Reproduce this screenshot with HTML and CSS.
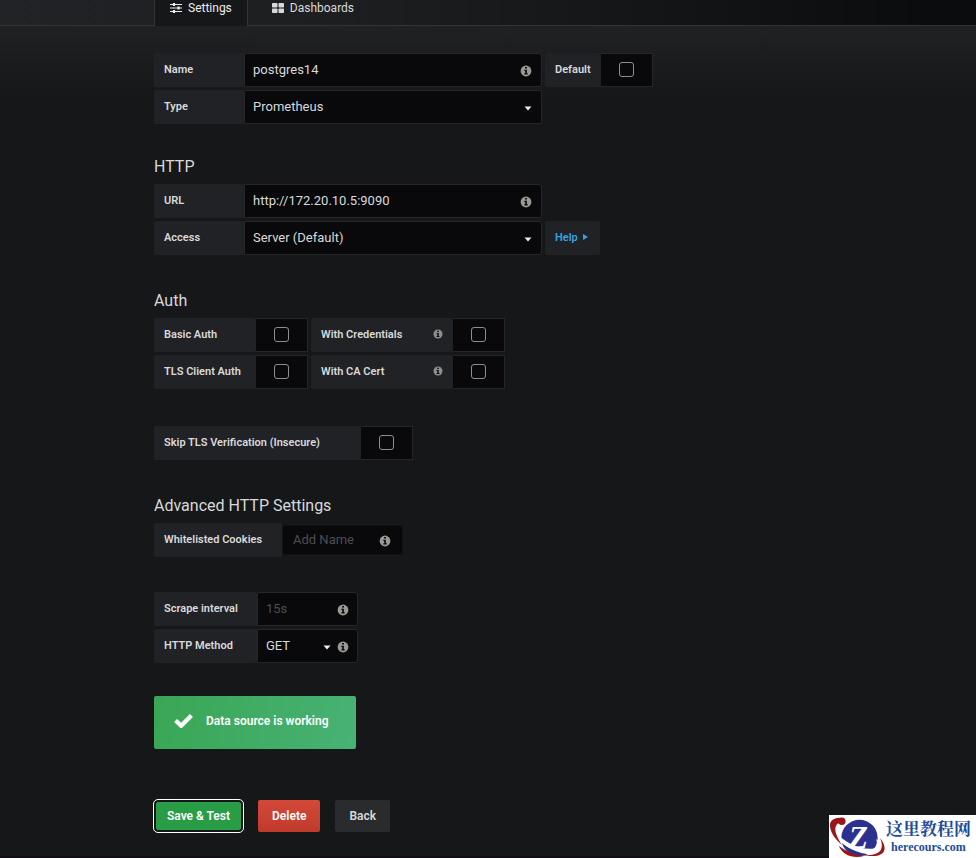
FILE: index.html
```
<!DOCTYPE html>
<html lang="en">

<head>
  <meta charset="UTF-8">
  <meta name="viewport" content="width=device-width, initial-scale=1.0">
  <title>Data Sources: postgres14</title>
  <link rel="stylesheet" href="styles.css">
</head>

<body>
  <!-- shared icons -->
  <svg class="sprite" aria-hidden="true">
    <symbol id="info" viewBox="0 0 12 12">
      <circle cx="6" cy="6" r="5.4" fill="currentColor" />
      <path d="M5 2h2v1.6H5zM4.3 4.7h2.6v3.6h.9v1.2H4.3V8.3h.9V5.9h-.9z" fill="#0b0c0e" />
    </symbol>
    <symbol id="caret" viewBox="0 0 8 5">
      <path d="M.5.5h7L4 4.5z" fill="currentColor" />
    </symbol>
  </svg>

  <header class="page-header">
    <nav class="tabs">
      <a class="tab active" href="#settings">
        <svg class="tab-icon" viewBox="0 0 12 12" fill="none" stroke="currentColor">
          <path d="M0 2.5h12M0 6h12M0 9.5h12" stroke-width="1.2" />
          <path d="M4 1v3M8.5 4.5v3M4 8v3" stroke-width="2.2" />
        </svg>
        Settings
      </a>
      <a class="tab" href="#dashboards">
        <svg class="tab-icon" viewBox="0 0 12 12" fill="currentColor">
          <rect x="0" y="1" width="5.5" height="4.6" rx=".8" />
          <rect x="6.5" y="1" width="5.5" height="4.6" rx=".8" />
          <rect x="0" y="6.5" width="5.5" height="4.6" rx=".8" />
          <rect x="6.5" y="6.5" width="5.5" height="4.6" rx=".8" />
        </svg>
        Dashboards
      </a>
    </nav>
  </header>

  <form class="page-body">
    <section class="group basic">
      <div class="row">
        <label class="label w-main" for="name">Name</label>
        <div class="field w-input">
          <input class="input" id="name" type="text" value="postgres14">
          <svg class="info"><use href="#info" /></svg>
        </div>
        <label class="label next" for="default">Default</label>
        <div class="switch"><input class="check" id="default" type="checkbox"></div>
      </div>
      <div class="row">
        <label class="label w-main" for="type">Type</label>
        <div class="field w-input">
          <select class="input" id="type">
            <option>Prometheus</option>
          </select>
          <svg class="caret"><use href="#caret" /></svg>
        </div>
      </div>
    </section>

    <section class="group">
      <h3 class="heading">HTTP</h3>
      <div class="row">
        <label class="label w-main" for="url">URL</label>
        <div class="field w-input">
          <input class="input" id="url" type="text" value="http://172.20.10.5:9090">
          <svg class="info"><use href="#info" /></svg>
        </div>
      </div>
      <div class="row">
        <label class="label w-main" for="access">Access</label>
        <div class="field w-input">
          <select class="input" id="access">
            <option>Server (Default)</option>
          </select>
          <svg class="caret"><use href="#caret" /></svg>
        </div>
        <button class="label help next" type="button">
          Help
          <svg class="help-caret" viewBox="0 0 5 6"><path d="M0 0v6l5-3z" fill="currentColor" /></svg>
        </button>
      </div>
    </section>

    <section class="group auth">
      <h3 class="heading">Auth</h3>
      <div class="row">
        <label class="label w-auth" for="basic-auth">Basic Auth</label>
        <div class="switch"><input class="check" id="basic-auth" type="checkbox"></div>
        <label class="label w-cred next" for="credentials">
          With Credentials
          <svg class="label-info"><use href="#info" /></svg>
        </label>
        <div class="switch"><input class="check" id="credentials" type="checkbox"></div>
      </div>
      <div class="row">
        <label class="label w-auth" for="tls-auth">TLS Client Auth</label>
        <div class="switch"><input class="check" id="tls-auth" type="checkbox"></div>
        <label class="label w-cred next" for="ca-cert">
          With CA Cert
          <svg class="label-info"><use href="#info" /></svg>
        </label>
        <div class="switch"><input class="check" id="ca-cert" type="checkbox"></div>
      </div>
    </section>

    <section class="group">
      <div class="row">
        <label class="label w-skip" for="skip-tls">Skip TLS Verification (Insecure)</label>
        <div class="switch"><input class="check" id="skip-tls" type="checkbox"></div>
      </div>
    </section>

    <section class="group cookies">
      <h3 class="heading">Advanced HTTP Settings</h3>
      <div class="row">
        <label class="label w-cookies" for="cookies">Whitelisted Cookies</label>
        <div class="field tags">
          <input class="input" id="cookies" type="text" placeholder="Add Name">
          <svg class="info"><use href="#info" /></svg>
        </div>
      </div>
    </section>

    <section class="group">
      <div class="row">
        <label class="label w-http" for="interval">Scrape interval</label>
        <div class="field w-short">
          <input class="input" id="interval" type="text" placeholder="15s">
          <svg class="info"><use href="#info" /></svg>
        </div>
      </div>
      <div class="row">
        <label class="label w-http" for="method">HTTP Method</label>
        <div class="field w-short with-info">
          <select class="input" id="method">
            <option>GET</option>
          </select>
          <svg class="caret"><use href="#caret" /></svg>
          <svg class="info"><use href="#info" /></svg>
        </div>
      </div>
    </section>

    <div class="alert" role="status">
      <svg class="alert-icon" viewBox="0 0 18 14"><path d="M1.5 7l5.3 5L16.5 2.2" fill="none" stroke="#fff" stroke-width="4" /></svg>
      Data source is working
    </div>

    <div class="buttons">
      <button class="btn save" type="button">Save &amp; Test</button>
      <button class="btn delete" type="button">Delete</button>
      <button class="btn back" type="button">Back</button>
    </div>
  </form>

  <aside class="badge">
    <svg class="badge-logo" viewBox="0 0 58 43">
      <circle cx="31" cy="23" r="18.5" fill="#2b318f" />
      <path d="M10 31c6 5 15 9 25 10.500C25 44 14 41 10 31z" fill="#9b1519" />
      <path d="M7 22c8 10 22 17 37 18 8 0 11-4 9-12l-5-4c2 7 0 10-6 10C28 34 15 27 7 17z" fill="#fff" />
      <path d="M15 3C8 1 1 4 1 10c0 6 4 13 12 20C8 22 5 15 7 11c1-3 4-4 8-4z" fill="#9b1519" />
      <circle cx="13" cy="6" r="3.800" fill="#9b1519" />
      <path d="M52 23c7 9 6 16-3 18-5 1-12 0-17-1 16 2 26-2 20-17z" fill="#9b1519" />
      <text x="20" y="33" class="badge-z">Z</text>
    </svg>
    <div class="badge-text">
      <span class="badge-name">这里教程网</span>
      <span class="badge-site">herecours.com</span>
    </div>
  </aside>
</body>

</html>
```
FILE: styles.css
```
* {
  box-sizing: border-box;
}

body {
  margin: 0;
  min-height: 100vh;
  border-bottom: 2px solid #130e16;
  background: #161719 linear-gradient(#202123 26px, #161719 100px) no-repeat;
  color: #d8d9da;
  font-family: Roboto, "Noto Sans CJK SC", sans-serif;
  font-size: 13px;
}

input,
select,
button {
  font-family: inherit;
}

.sprite {
  position: absolute;
  width: 0;
  height: 0;
}

/* header tabs */
.page-header {
  height: 26px;
  padding-left: 154px;
  border-bottom: 1px solid #333436;
  background: linear-gradient(90deg, #222326, #1c1d1f 40%, #0b0c0e 95%);
}

.tabs {
  display: flex;
}

.tab {
  display: flex;
  align-items: center;
  gap: 6px;
  height: 26px;
  padding: 0 15px 10px;
  color: #d8d9da;
  font-size: 12px;
  line-height: 16px;
  text-decoration: none;
}

.tab + .tab {
  margin-left: 9px;
}

.tab.active {
  background: #161719;
  border: solid #333436;
  border-width: 0 1px;
  color: #ececec;
}

.tab-icon {
  width: 12px;
  height: 12px;
}

/* form */
.page-body {
  padding: 27px 16px 24px 154px;
}

.group {
  display: flex;
  flex-direction: column;
  gap: 3px;
  margin-bottom: 33px;
}

.group.basic {
  margin-bottom: 30px;
}

.group.auth {
  margin-bottom: 37px;
}

.group.cookies {
  margin-bottom: 35px;
}

.heading {
  margin: 0 0 1px;
  font-size: 16px;
  font-weight: 400;
  line-height: 26px;
}

.row {
  display: flex;
  height: 34px;
}

.label {
  display: flex;
  align-items: center;
  padding: 0 10px 2px;
  border: 0;
  border-radius: 2px;
  background: #212226;
  color: #d8d9da;
  font-size: 11px;
  font-weight: 600;
  white-space: nowrap;
}

.next {
  margin-left: 3px;
}

.w-main {
  width: 90px;
}

.w-auth {
  width: 102px;
}

.w-cred {
  width: 142px;
}

.w-skip {
  width: 207px;
}

.w-cookies {
  width: 128px;
}

.w-http {
  width: 103px;
}

.w-input {
  flex: 0 1 298px;
}

.w-short {
  flex: 0 1 101px;
}

.field {
  position: relative;
}

.input {
  width: 100%;
  height: 34px;
  padding: 0 32px 2px 8px;
  border: 1px solid #262628;
  border-radius: 0 3px 3px 0;
  outline: 0;
  background: #09090b;
  color: #d8d9da;
  font-size: 13px;
  appearance: none;
}

.input::placeholder {
  color: #4c4d50;
}

.info {
  position: absolute;
  top: 12px;
  right: 10px;
  width: 12px;
  height: 12px;
  color: #9b9994;
}

.w-short .info {
  right: 9px;
}

.caret {
  position: absolute;
  top: 16px;
  right: 10px;
  width: 8px;
  height: 5px;
  color: #ececec;
  pointer-events: none;
}

.with-info .caret {
  right: 27px;
}

.label-info {
  width: 10px;
  height: 10px;
  margin-left: auto;
  color: #8e8e8e;
}

.switch {
  display: flex;
  align-items: center;
  justify-content: center;
  width: 52px;
  padding-bottom: 2px;
  border: 1px solid #262628;
  border-left: 0;
  background: #09090b;
}

.check {
  width: 15px;
  height: 15px;
  margin: 0;
  border: 1px solid #8e8e8e;
  border-radius: 3px;
  appearance: none;
}

.check:checked {
  background: #33b5e5;
}

.help {
  gap: 5px;
  padding-right: 12px;
  color: #33a2e5;
}

.help-caret {
  width: 5px;
  height: 6px;
}

.tags {
  flex: 0 1 121px;
  padding: 2px 0;
}

.tags .input {
  height: 30px;
  padding-left: 10px;
  border-color: #111214;
}

.tags .info {
  right: 12px;
}

/* save result */
.alert {
  display: flex;
  align-items: center;
  gap: 13px;
  width: fit-content;
  height: 53px;
  padding: 0 27px 4px 20px;
  border-radius: 2px;
  background: linear-gradient(100deg, #3aa655, #47b274);
  color: #fff;
  font-size: 12px;
  font-weight: 600;
}

.alert-icon {
  width: 19px;
  height: 15px;
}

.buttons {
  display: flex;
  align-items: center;
  gap: 15px;
  margin-top: 51px;
}

.btn {
  height: 32px;
  padding: 0 14px;
  border: 0;
  border-radius: 2px;
  color: #fff;
  font-size: 12px;
  font-weight: 600;
}

.save {
  height: 28px;
  margin: 2px;
  padding: 0 11px;
  background: #299c46;
  outline: 1px solid #fff;
  outline-offset: 2px;
}

.delete {
  background: linear-gradient(#d44939, #bf3a2b);
}

.back {
  background: #2a2b2d;
  color: #d8d9da;
}

/* site badge in the corner */
.badge {
  position: fixed;
  right: 0;
  bottom: 0;
  display: flex;
  height: 43px;
  padding-right: 5px;
  background: #fff;
  color: #1d4b9c;
}

.badge-logo {
  width: 57px;
  height: 43px;
}

.badge-z {
  fill: #fff;
  font: italic bold 32px "Liberation Serif", serif;
}

.badge-text {
  display: flex;
  flex-direction: column;
  align-items: center;
  padding-top: 1px;
  font-weight: 700;
}

.badge-name {
  font-family: "Noto Serif CJK SC", "Noto Sans CJK SC", sans-serif;
  font-size: 17px;
  line-height: 24px;
}

.badge-site {
  font-family: "Liberation Serif", serif;
  font-size: 12px;
  line-height: 14px;
}
```
